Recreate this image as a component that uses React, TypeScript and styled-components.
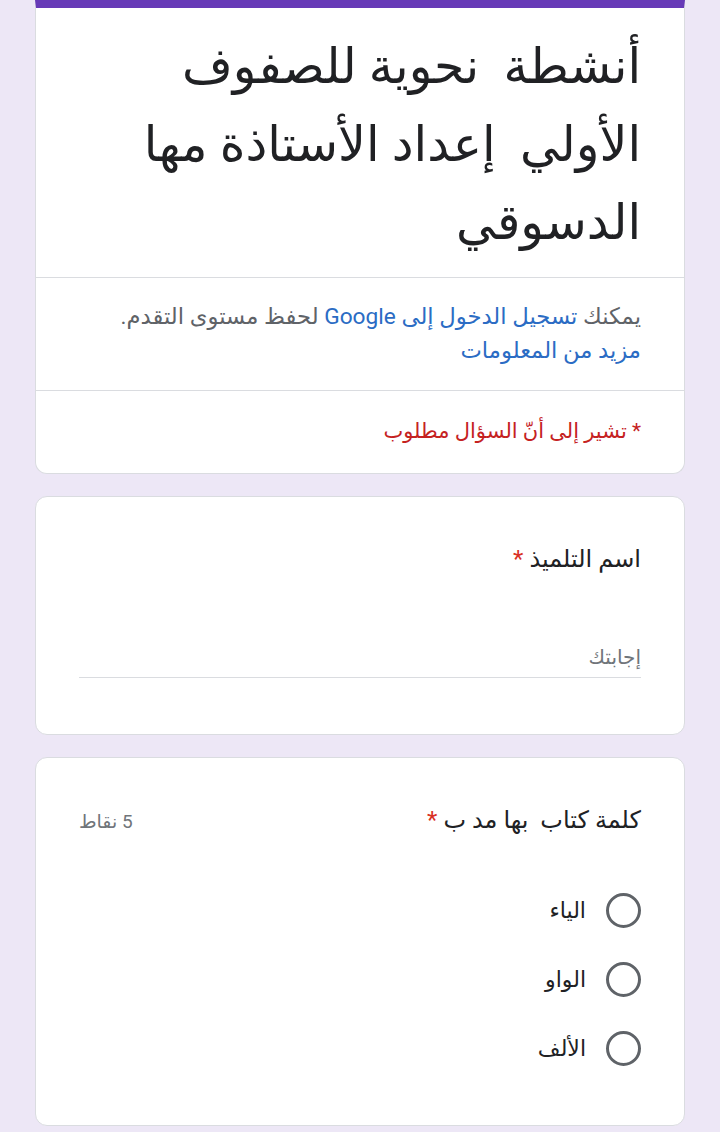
import React from "react";
import styled, { createGlobalStyle } from "styled-components";

const Global = createGlobalStyle`
  html, body { margin: 0; padding: 0; background: #ede7f6; }
  body { font-family: Roboto, "DejaVu Sans", sans-serif; }
`;

const Page = styled.div`
  direction: rtl;
  min-height: 1132px;
  padding: 0 35px 20px 35px;
  box-sizing: border-box;
  display: flex;
  flex-direction: column;
  gap: 22px;
  background: #ede7f6;
`;

const Card = styled.section<{ $top?: boolean }>`
  background: #fff;
  border: 1px solid #dadce0;
  border-radius: ${(p) => (p.$top ? "0 0 12px 12px" : "12px")};
  ${(p) => (p.$top ? "border-top: 8px solid #673ab7;" : "")}
  box-sizing: border-box;
  overflow: hidden;
`;

const Section = styled.div<{ $pad: string; $divider?: boolean }>`
  padding: ${(p) => p.$pad};
  ${(p) => (p.$divider ? "border-bottom: 1px solid #dadce0;" : "")}
`;

const Title = styled.h1`
  margin: 0;
  font-weight: 400;
  font-size: 49px;
  line-height: 78px;
  color: #202124;
`;

const Desc = styled.p`
  margin: 0;
  font-size: 22.7px;
  line-height: 34px;
  color: #5f6368;
`;

const Link = styled.span`
  color: #2b6cc4;
`;

const Required = styled.p`
  margin: 0;
  font-size: 21px;
  line-height: 30px;
  color: #c5221f;
`;

const QHeader = styled.div`
  display: flex;
  justify-content: space-between;
  align-items: baseline;
`;

const QTitle = styled.div`
  font-size: 24px;
  line-height: 36px;
  color: #202124;
`;

const Star = styled.span`
  color: #d93025;
  margin-right: 6px;
`;

const Points = styled.div`
  font-size: 19px;
  color: #70757a;
`;

const AnswerField = styled.div`
  margin-top: 65px;
  border-bottom: 1px solid #dadce0;
  font-size: 20px;
  line-height: 30px;
  padding-bottom: 5px;
  color: #70757a;
`;

const Options = styled.div`
  margin-top: 54px;
  display: flex;
  flex-direction: column;
  gap: 33px;
`;

const Option = styled.label`
  display: flex;
  align-items: center;
  gap: 20px;
  font-size: 22px;
  color: #202124;
  height: 36px;
`;

const Radio = styled.span`
  width: 29px;
  height: 29px;
  border: 3px solid #5f6368;
  border-radius: 50%;
  flex: none;
`;

export default function App() {
  return (
    <>
      <Global />
      <Page>
        <Card $top>
          <Section $pad="20px 43px 15px 43px" $divider>
            <Title>أنشطة&nbsp; نحوية للصفوف الأولي&nbsp; إعداد الأستاذة مها الدسوقي</Title>
          </Section>
          <Section $pad="22px 43px 22px 43px" $divider>
            <Desc>
              يمكنك <Link>تسجيل الدخول إلى Google</Link> لحفظ مستوى التقدم.
              <br />
              <Link>مزيد من المعلومات</Link>
            </Desc>
          </Section>
          <Section $pad="25px 43px 27px 43px">
            <Required>* تشير إلى أنّ السؤال مطلوب</Required>
          </Section>
        </Card>

        <Card>
          <Section $pad="44px 43px 56px 43px">
            <QTitle>
              اسم التلميذ<Star>*</Star>
            </QTitle>
            <AnswerField>إجابتك</AnswerField>
          </Section>
        </Card>

        <Card>
          <Section $pad="44px 43px 59px 43px">
            <QHeader>
              <QTitle>
                كلمة كتاب&nbsp; بها مد ب<Star>*</Star>
              </QTitle>
              <Points>5 نقاط</Points>
            </QHeader>
            <Options>
              <Option>
                <Radio />
                الياء
              </Option>
              <Option>
                <Radio />
                الواو
              </Option>
              <Option>
                <Radio />
                الألف
              </Option>
            </Options>
          </Section>
        </Card>
      </Page>
    </>
  );
}
